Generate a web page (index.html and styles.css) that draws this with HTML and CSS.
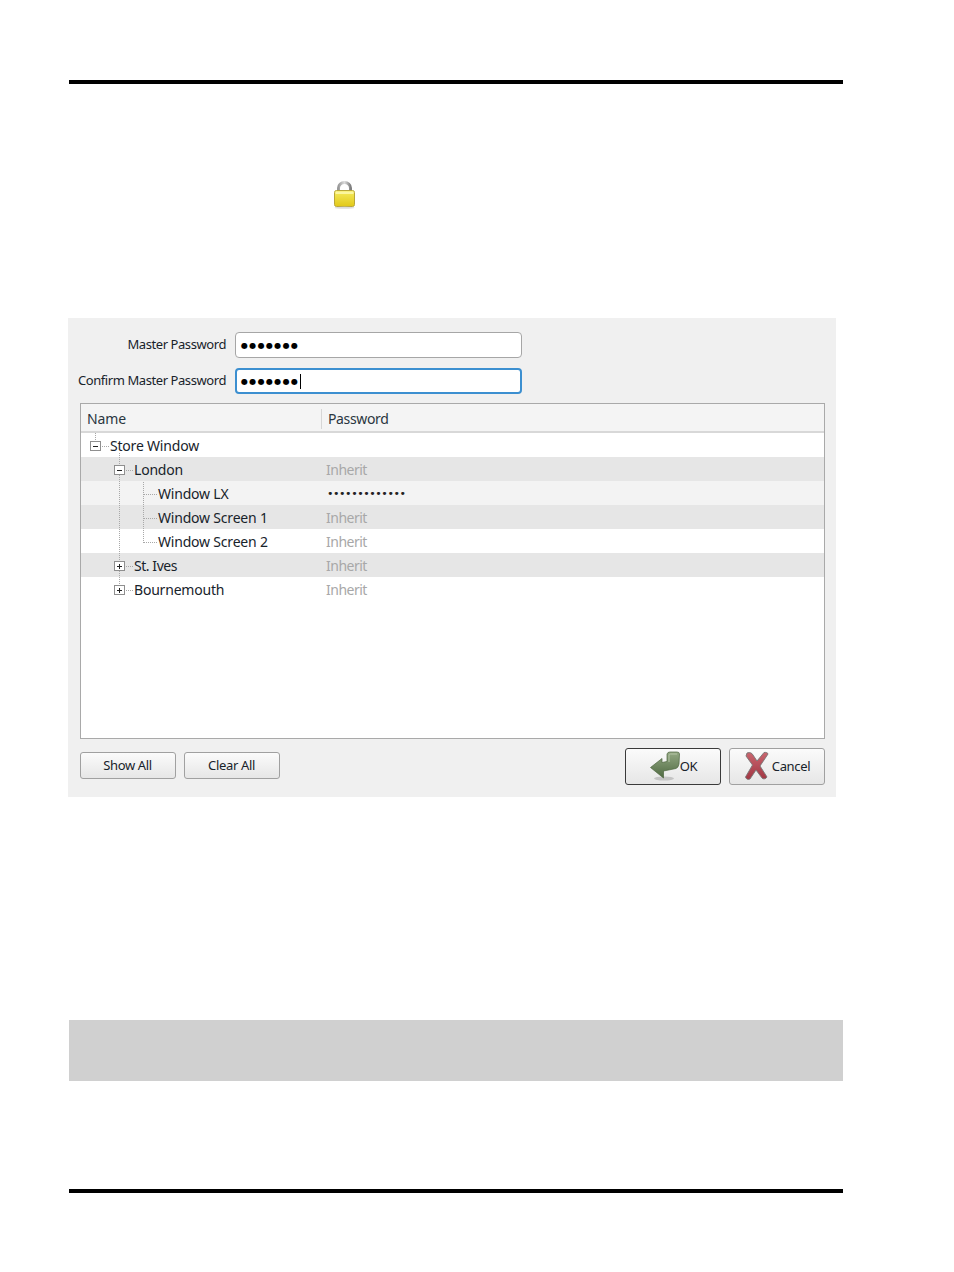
FILE: index.html
```html
<!DOCTYPE html>
<html lang="en">
<head>
<meta charset="utf-8">
<title>Master Password</title>
<link rel="stylesheet" href="styles.css">
</head>
<body>
<div class="page">
  <div class="rule"></div>
  <div class="lock-line">
    <svg class="lock" width="24" height="28" viewBox="0 0 24 28">
      <defs>
        <linearGradient id="lockBody" x1="0" y1="0" x2="0" y2="1"><stop offset="0" stop-color="#f5ec60"/><stop offset="1" stop-color="#e2c818"/></linearGradient>
        <linearGradient id="lockBow" x1="0" y1="0" x2="1" y2="0"><stop offset="0" stop-color="#9a9a9a"/><stop offset=".5" stop-color="#dcdcdc"/><stop offset="1" stop-color="#808080"/></linearGradient>
      </defs>
      <path d="M5.500 12V7a6 5.500 0 0 1 12 0V12" fill="none" stroke="url(#lockBow)" stroke-width="3"/>
      <rect x="1.500" y="9.500" width="20" height="16" rx="2" fill="url(#lockBody)" stroke="#b8a63a"/>
      <rect x="2.500" y="10.500" width="18" height="2.500" fill="#fbf6a0"/>
      <ellipse cx="11.500" cy="26.800" rx="10" ry="1" fill="#dcdcdc"/>
    </svg>
  </div>
  <div class="dialog">
    <div class="field">
      <label class="field-label">Master Password</label>
      <div class="input"><span class="secret">●●●●●●●</span></div>
    </div>
    <div class="field">
      <label class="field-label">Confirm Master Password</label>
      <div class="input input-focus"><span class="secret">●●●●●●●</span><span class="caret"></span></div>
    </div>
    <div class="tree">
      <div class="tree-head">
        <div class="col-name">Name</div>
        <div class="col-pass">Password</div>
      </div>
      <div class="tree-body">
        <svg class="connectors" width="120" height="180" viewBox="0 0 120 180">
          <g stroke="#a8a8a8" stroke-dasharray="1 1" fill="none" shape-rendering="crispEdges">
            <path d="M14 0V8M19 13H28"/>
            <path d="M38 20V157M43 37H52M43 133H52M43 157H52"/>
            <path d="M62 49V110M63 61H76M63 85H76M63 109H76"/>
          </g>
          <g fill="#fff" stroke="#8f8f8f" shape-rendering="crispEdges">
            <rect x="9.500" y="8.500" width="10" height="9"/>
            <rect x="33.500" y="32.500" width="10" height="9"/>
            <rect x="33.500" y="128.500" width="10" height="9"/>
            <rect x="33.500" y="152.500" width="10" height="9"/>
          </g>
          <path d="M12 13H17M36 37H41M36 133H41M38.500 130.500V135.500M36 157H41M38.500 154.500V159.500" stroke="#222" fill="none" shape-rendering="crispEdges"/>
        </svg>
        <div class="row"><span class="cell-name lvl0">Store Window</span></div>
        <div class="row row-alt"><span class="cell-name lvl1">London</span><span class="cell-pass">Inherit</span></div>
        <div class="row row-soft"><span class="cell-name lvl2">Window LX</span><span class="cell-pass cell-set">•••••••••••••</span></div>
        <div class="row row-alt"><span class="cell-name lvl2">Window Screen 1</span><span class="cell-pass">Inherit</span></div>
        <div class="row"><span class="cell-name lvl2">Window Screen 2</span><span class="cell-pass">Inherit</span></div>
        <div class="row row-alt"><span class="cell-name lvl1 tight">St. Ives</span><span class="cell-pass">Inherit</span></div>
        <div class="row"><span class="cell-name lvl1">Bournemouth</span><span class="cell-pass">Inherit</span></div>
      </div>
    </div>
    <div class="actions">
      <div class="actions-left">
        <button class="btn btn-small">Show All</button>
        <button class="btn btn-small">Clear All</button>
      </div>
      <div class="actions-right">
        <button class="btn btn-large btn-default">
          <svg class="icon-ok" width="30" height="30" viewBox="0 0 30 30">
            <defs><linearGradient id="okFill" x1="0" y1="0" x2="0" y2="1"><stop offset="0" stop-color="#93a883"/><stop offset="1" stop-color="#4f6a42"/></linearGradient></defs>
            <ellipse cx="14" cy="27.500" rx="10" ry="2" fill="#c4c4c4"/>
            <path d="M0.500 16.500 L12 7.500 V11.500 L17 10.500 V3 Q17.500 1 20 1 L27 1 Q29.500 1 29.500 3 L29 13 Q28.500 16.500 26 17.500 L13.500 20 V27 Z" fill="url(#okFill)" stroke="#4e663f" stroke-width=".7"/>
            <path d="M19 11 V4 Q19 3 20.500 3 H27" fill="none" stroke="#b4c4a6" stroke-width="1"/>
          </svg>
          <span class="btn-text-ok">OK</span>
        </button>
        <button class="btn btn-large">
          <svg width="26" height="30" viewBox="0 0 26 30">
            <defs><linearGradient id="xFill" x1="0" y1="0" x2="0" y2="1"><stop offset="0" stop-color="#c9666f"/><stop offset="1" stop-color="#a23643"/></linearGradient></defs>
            <path d="M3 2 C6 1 8 2 9 4 L13 10 L20 1.500 C22 1 24 2 24 3 L16 15 L23 26 C22 28 19 28.500 18 27 L12 19 L6 28 C4 29 2 28 1.500 26 L8.500 14 L2 5 Z" fill="url(#xFill)" stroke="#777" stroke-width=".9"/>
          </svg>
          <span>Cancel</span>
        </button>
      </div>
    </div>
  </div>
  <div class="band"></div>
  <div class="rule rule-bottom"></div>
</div>
</body>
</html>
```
FILE: styles.css
```css
* { box-sizing: border-box; }
html, body { margin: 0; padding: 0; background: #fff; }
body { font-family: "Noto Sans", "Open Sans", sans-serif; color: #18232b; }
.page { width: 954px; height: 1272px; padding: 80px 0 0 69px; }
.rule { width: 774px; height: 4px; background: #000; }
.rule-bottom { margin-top: 108px; }
.lock-line { height: 234px; padding: 97px 0 0 264px; }
.lock { display: block; }
.dialog {
  width: 768px; height: 479px; margin-left: -1px;
  background: #f0f0f0; padding: 14px 11px 0 12px;
  display: flex; flex-direction: column;
}
.field { display: flex; align-items: center; height: 26px; margin-bottom: 10px; }
.field-label { width: 147px; margin-right: 8px; padding-bottom: 2px; padding-right: 1px; display: flex; justify-content: flex-end; font-size: 13px; letter-spacing: -0.42px; white-space: nowrap; }
.input {
  width: 287px; height: 26px; background: #fff;
  border: 1px solid #a6a6a6; border-radius: 4px;
  padding-left: 5px; display: flex; align-items: center;
}
.input-focus { border: 2px solid #3c8fd0; padding-left: 4px; }
.secret { font-family: "DejaVu Sans", sans-serif; font-size: 8px; letter-spacing: 1.35px; color: #000; line-height: 1; padding-top: 1px; }
.caret { width: 1px; height: 15px; background: #000; margin-left: 1px; }
.tree { width: 745px; height: 336px; margin-top: -1px; background: #fff; border: 1px solid #a9a9a9; }
.tree-head { display: flex; height: 29px; border-bottom: 2px solid #d8d8d8; font-size: 14px; background: #f4f4f4; color: #2a3640; align-items: center; padding-top: 2px; }
.col-name { width: 241px; padding-left: 6px; height: 20px; border-right: 1px solid #d6d6d6; line-height: 20px; letter-spacing: -0.1px; }
.col-pass { padding-left: 6px; line-height: 20px; letter-spacing: -0.35px; }
.tree-body { position: relative; }
.connectors { position: absolute; left: 0; top: 0; }
.row { display: flex; height: 24px; align-items: center; font-size: 14px; }
.row-alt { background: #e6e6e6; }
.row-soft { background: #f3f3f3; }
.cell-name { width: 245px; flex: none; white-space: nowrap; letter-spacing: -0.2px; }
.tight { letter-spacing: -0.45px; }
.lvl0 { padding-left: 29px; }
.lvl1 { padding-left: 53px; }
.lvl2 { padding-left: 77px; }
.cell-pass { color: #a8a8a8; letter-spacing: -0.5px; }
.cell-set { color: #222; letter-spacing: -0.45px; padding-left: 1px; font-family: "DejaVu Sans", sans-serif; font-size: 11px; }
.actions { display: flex; justify-content: space-between; width: 745px; margin-top: 9px; align-items: flex-start; }
.actions-left { display: flex; gap: 8px; padding-top: 4px; }
.actions-right { display: flex; gap: 8px; }
.btn {
  font-family: inherit; font-size: 13px; letter-spacing: -0.35px; color: #18232b;
  width: 96px; border: 1px solid #a0a0a0; border-radius: 3px;
  background: linear-gradient(#fbfbfb, #e6e6e6);
  display: flex; align-items: center; justify-content: center; padding: 0 0 2px 0;
}
.btn-small { height: 27px; padding-right: 1px; }
.btn-large { height: 37px; gap: 2px; }
.btn-default { border: 1px solid #3a3a3a; gap: 0; padding-left: 2px; }
.icon-ok { margin-left: -1px; }
.band { width: 774px; height: 61px; margin-top: 223px; background: #d0d0d0; }
```
